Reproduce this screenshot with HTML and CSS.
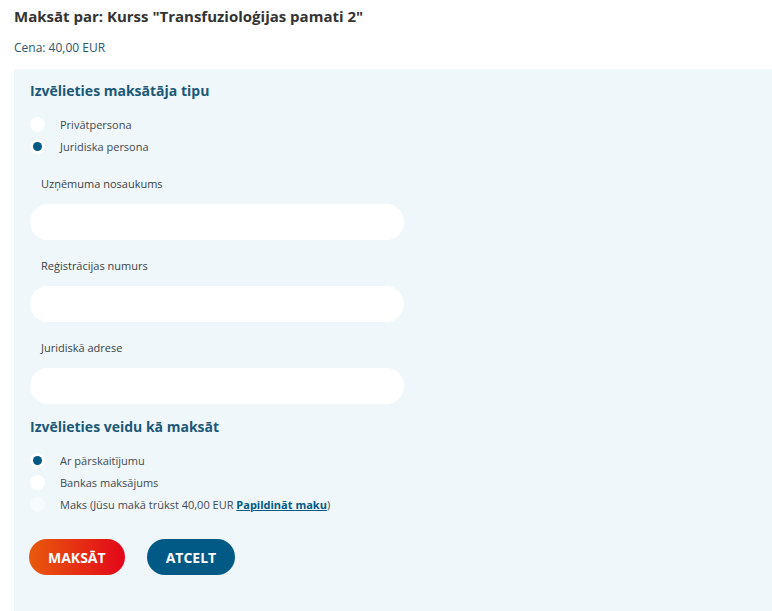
FILE: index.html
```html
<!DOCTYPE html>
<html lang="lv">

<head>
   <meta charset="UTF-8" />
   <meta name="viewport" content="width=device-width, initial-scale=1.0" />
   <title>Maksājums</title>
   <link rel="stylesheet" href="styles.css">
</head>

<body>
   <div class="page">
      <h1 class="title">Maksāt par: Kurss "Transfuzioloģijas pamati 2"</h1>
      <p class="price">Cena: 40,00 EUR</p>

      <form class="panel">
         <h2 class="section-title">Izvēlieties maksātāja tipu</h2>
         <div class="radio-list">
            <label class="radio-row">
               <input type="radio" name="payerType" value="private">
               <span class="radio-mark"></span>
               <span>Privātpersona</span>
            </label>
            <label class="radio-row">
               <input type="radio" name="payerType" value="company" checked>
               <span class="radio-mark"></span>
               <span>Juridiska persona</span>
            </label>
         </div>

         <div class="field">
            <label class="field-label" for="companyName">Uzņēmuma nosaukums</label>
            <input class="text-input" type="text" id="companyName">
         </div>
         <div class="field">
            <label class="field-label" for="regNumber">Reģistrācijas numurs</label>
            <input class="text-input" type="text" id="regNumber">
         </div>
         <div class="field">
            <label class="field-label" for="address">Juridiskā adrese</label>
            <input class="text-input" type="text" id="address">
         </div>

         <h2 class="section-title section-title--second">Izvēlieties veidu kā maksāt</h2>
         <div class="radio-list">
            <label class="radio-row">
               <input type="radio" name="payMethod" value="transfer" checked>
               <span class="radio-mark"></span>
               <span>Ar pārskaitījumu</span>
            </label>
            <label class="radio-row">
               <input type="radio" name="payMethod" value="bank">
               <span class="radio-mark"></span>
               <span>Bankas maksājums</span>
            </label>
            <label class="radio-row">
               <input type="radio" name="payMethod" value="wallet" disabled>
               <span class="radio-mark"></span>
               <span>Maks (Jūsu makā trūkst 40,00 EUR <a href="#" class="wallet-link">Papildināt maku</a>)</span>
            </label>
         </div>

         <div class="actions">
            <button type="submit" class="btn btn-pay">Maksāt</button>
            <button type="button" class="btn btn-cancel">Atcelt</button>
         </div>
      </form>
   </div>
</body>

</html>
```

FILE: styles.css
```css
:root {
   --blue: #005a85;
   --heading: #1b5878;
   --text: #3f4a50;
   --panel: #eff7fb;
}

*,
*::before,
*::after {
   margin: 0;
   padding: 0;
   box-sizing: border-box;
}

body {
   font-family: "Open Sans", Arial, sans-serif;
   background: #fff;
   color: var(--text);
   font-size: 11px;
}

.page {
   padding-left: 14px;
   min-height: 100vh;
   display: flex;
   flex-direction: column;
}

.title {
   margin-top: 6px;
   font-size: 15px;
   line-height: 20px;
   font-weight: 700;
   color: #333;
}

.price {
   margin-top: 13px;
   font-size: 12px;
   line-height: 18px;
   color: #2d5670;
}

.panel {
   flex: 1;
   margin-top: 12px;
   background: var(--panel);
   padding: 12px 16px 30px;
}

.section-title {
   font-size: 14px;
   line-height: 20px;
   font-weight: 700;
   color: var(--heading);
}

.section-title--second {
   margin-top: 13px;
}

.radio-list {
   margin-top: 12px;
   display: grid;
}

.radio-row {
   display: flex;
   align-items: center;
   gap: 15px;
   height: 22px;
   cursor: pointer;
}

.radio-row input {
   display: none;
}

.radio-mark {
   width: 15px;
   height: 15px;
   border-radius: 50%;
   background: #fff;
   display: grid;
   place-items: center;
}

.radio-row input:checked + .radio-mark::after {
   content: '';
   width: 9px;
   height: 9px;
   border-radius: 50%;
   background: var(--blue);
}

.radio-row input:disabled + .radio-mark {
   background: #f6fbfd;
}

.wallet-link {
   color: var(--blue);
   font-weight: 700;
}

.field {
   margin-top: 18px;
   display: grid;
}

.field-label {
   padding-left: 11px;
   line-height: 18px;
   margin-bottom: 11px;
   color: #3a3f44;
}

.text-input {
   width: 374px;
   height: 36px;
   border: none;
   border-radius: 18px;
   background: #fff;
   padding: 0 16px;
   font: inherit;
   outline: none;
}

.field + .field {
   margin-top: 17px;
}

.actions {
   margin-top: 24px;
   display: flex;
   gap: 22px;
}

.btn {
   height: 36px;
   padding: 0 19px;
   border: none;
   border-radius: 18px;
   color: #fff;
   font-family: inherit;
   font-size: 14px;
   font-weight: 700;
   text-transform: uppercase;
   cursor: pointer;
}

.btn-pay {
   margin-left: -1px;
   background: linear-gradient(90deg, #e85a0c, #e3061a);
}

.btn-cancel {
   background: var(--blue);
}
```
